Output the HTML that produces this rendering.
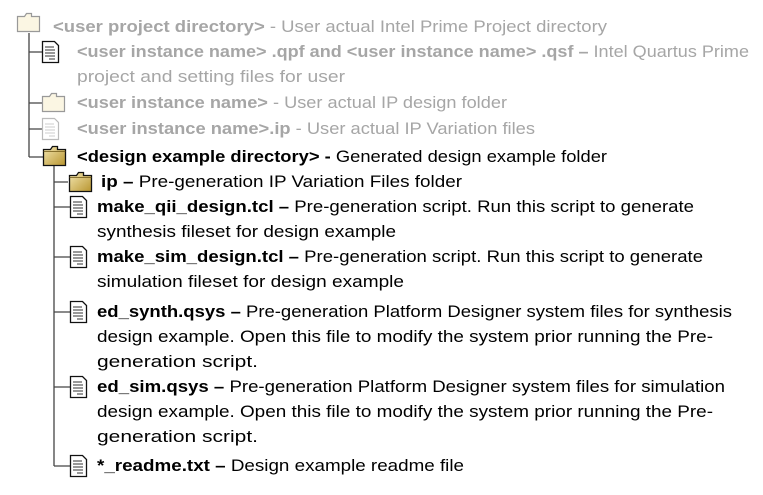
<!DOCTYPE html>
<html><head><meta charset="utf-8"><style>
html,body{margin:0;padding:0;background:#fff;width:763px;height:495px;overflow:hidden}
body{position:relative;font-family:"Liberation Sans",sans-serif;font-size:17px}
.t{position:absolute;white-space:nowrap;line-height:20px;color:#000;transform-origin:0 50%}
.g{color:#a6a6a6}
b{font-weight:bold}
svg{position:absolute;left:0;top:0}
</style></head><body>
<svg width="763" height="495">
<defs>
<linearGradient id="fg" x1="0" y1="0" x2="1" y2="1"><stop offset="0" stop-color="#f3e6b0"/><stop offset="1" stop-color="#b8952f"/></linearGradient>
<g id="folder"><path d="M0.5 3.5 h7 l2 -3 h5 v3 h8 v16 h-22z" fill="url(#fg)" stroke="#111" stroke-width="1.3"/><path d="M0.5 5.5 h22" stroke="#6b5514" stroke-width="0.8"/></g>
<g id="folderg"><path d="M0.5 3.5 h7 l2 -3 h5 v3 h8 v15 h-22z" fill="#fbf6e3" stroke="#999" stroke-width="1.2"/></g>
<g id="file"><path d="M0.5 0.5 h12 l4 4 v17 h-16z" fill="#fff" stroke="#111" stroke-width="1.3"/><path d="M3 6h9M3 9h10M3 12h10M3 15h10M7 18h6" stroke="#333" stroke-width="1"/></g>
<g id="fileg"><path d="M0.5 0.5 h12 l4 4 v17 h-16z" fill="#fff" stroke="#bbb" stroke-width="1.2"/><path d="M3 6h9M3 9h10M3 12h10M3 15h10M7 18h6" stroke="#ccc" stroke-width="1"/></g>
</defs>
<g stroke="#444" stroke-width="1.3" fill="none">
<path d="M29 33V157M29 52H42M29 103H42M29 129H42M29 157H43"/>
<path d="M54 166V466M54 182H68M54 207H70M54 257H70M54 312H70M54 387H70M54 466H70"/>
</g>
<use href="#folderg" x="17" y="13"/>
<use href="#file" x="42" y="41"/>
<use href="#folderg" x="42" y="93"/>
<use href="#fileg" x="42" y="118"/>
<use href="#folder" x="43" y="146"/>
<use href="#folder" x="69" y="172"/>
<use href="#file" x="70" y="196"/>
<use href="#file" x="70" y="246"/>
<use href="#file" x="70" y="301"/>
<use href="#file" x="70" y="376"/>
<use href="#file" x="70" y="455"/>
</svg>
<div class="t g" style="left:53px;top:17px" title="554"><b>&lt;user project directory&gt;</b> - User actual Intel Prime Project directory</div>
<div class="t g" style="left:77px;top:42px" title="672"><b>&lt;user instance name&gt; .qpf and &lt;user instance name&gt; .qsf –</b> Intel Quartus Prime</div>
<div class="t g" style="left:77px;top:67px" title="268">project and setting files for user</div>
<div class="t g" style="left:77px;top:93px" title="430"><b>&lt;user instance name&gt;</b> - User actual IP design folder</div>
<div class="t g" style="left:77px;top:119px" title="458"><b>&lt;user instance name&gt;.ip</b> - User actual IP Variation files</div>
<div class="t" style="left:77px;top:147px" title="530"><b>&lt;design example directory&gt; -</b> Generated design example folder</div>
<div class="t" style="left:101px;top:172px" title="361"><b>ip –</b> Pre-generation IP Variation Files folder</div>
<div class="t" style="left:97px;top:197px" title="597"><b>make_qii_design.tcl –</b> Pre-generation script. Run this script to generate</div>
<div class="t" style="left:97px;top:222px" title="299">synthesis fileset for design example</div>
<div class="t" style="left:97px;top:247px" title="606"><b>make_sim_design.tcl –</b> Pre-generation script. Run this script to generate</div>
<div class="t" style="left:97px;top:272px" title="307">simulation fileset for design example</div>
<div class="t" style="left:97px;top:302px" title="635"><b>ed_synth.qsys –</b> Pre-generation Platform Designer system files for synthesis</div>
<div class="t" style="left:97px;top:327px" title="616">design example. Open this file to modify the system prior running the Pre-</div>
<div class="t" style="left:97px;top:352px" title="161">generation script.</div>
<div class="t" style="left:97px;top:377px" title="628"><b>ed_sim.qsys –</b> Pre-generation Platform Designer system files for simulation</div>
<div class="t" style="left:97px;top:402px" title="616">design example. Open this file to modify the system prior running the Pre-</div>
<div class="t" style="left:97px;top:427px" title="161">generation script.</div>
<div class="t" style="left:97px;top:456px" title="367"><b>*_readme.txt –</b> Design example readme file</div>
<script>
document.querySelectorAll('.t').forEach(function(e){
  var w=parseFloat(e.getAttribute('title'));var n=e.getBoundingClientRect().width;
  if(n>0){e.style.transform='scaleX('+(w/n)+')';}
  e.removeAttribute('title');
});
</script>
</body></html>
